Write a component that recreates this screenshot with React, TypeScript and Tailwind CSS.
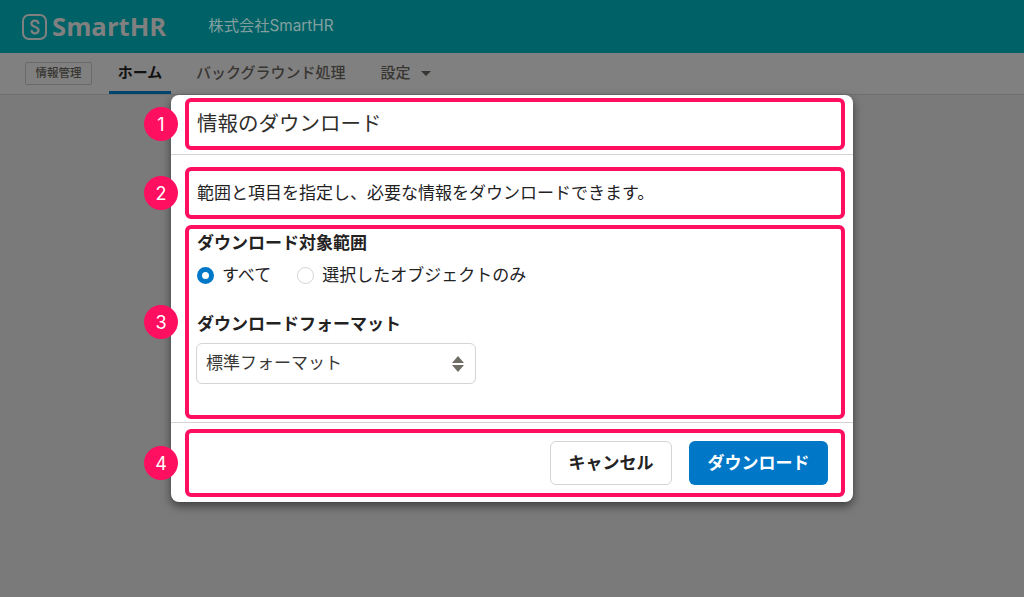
const jp = "font-['Inter','Noto_Sans_CJK_JP',sans-serif]";

function Badge({ n }: { n: number }) {
  return (
    <div className="absolute left-[-45px] top-1/2 flex h-[34px] w-[34px] -translate-y-1/2 items-center justify-center rounded-full bg-[#ff0f5f] text-[18px] font-normal text-white">
      {n}
    </div>
  );
}

function Radio({ checked, label }: { checked?: boolean; label: string }) {
  return (
    <div className="flex items-center gap-[8px]">
      {checked ? (
        <span className="h-[17px] w-[17px] rounded-full border-[5px] border-[#0077c7] bg-white" />
      ) : (
        <span className="h-[17px] w-[17px] rounded-full border border-[#d6d3d0] bg-white" />
      )}
      <span className="text-[17px] leading-[20px] text-[#23221f]">{label}</span>
    </div>
  );
}

export default function App() {
  return (
    <div className={`relative h-[597px] w-[1024px] overflow-hidden bg-[#7b7a7a] ${jp}`}>
      <header className="flex h-[53px] items-center bg-[#006266] pl-[22px]">
        <div className="flex h-[26px] w-[25px] items-center justify-center rounded-[7px] border-[2.5px] border-[#808080]">
          <svg viewBox="0 0 16 16" className="h-[18px] w-[18px]" fill="none" stroke="#808080" strokeWidth="2" strokeLinecap="round">
            <path d="M11 4.500 A3.200 3.200 0 0 0 4.800 5 c0 2.800 6.400 2.800 6.400 5.800 A3.200 3.200 0 0 1 5 11.500" />
          </svg>
        </div>
        <span className="ml-[5px] font-['Open_Sans',sans-serif] text-[25.700px] font-bold leading-none text-[#808080]">SmartHR</span>
        <span className="ml-[42px] text-[15.300px] text-[#82a0a0]">株式会社SmartHR</span>
      </header>
      <nav className="flex h-[42px] items-stretch border-b border-[#6e6e6e] bg-[#808080] pl-[25px] text-[15px] font-medium">
        <div className="my-auto flex h-[23px] w-[67px] items-center justify-center rounded-[2px] border border-[#6b6a68] text-[11.500px] text-[#383632]">
          情報管理
        </div>
        <div className="ml-[17px] flex w-[62px] items-center justify-center border-b-[3px] border-[#004470] pt-[3px] font-bold text-[#121110]">
          ホーム
        </div>
        <div className="ml-[25px] flex items-center text-[#383632]">バックグラウンド処理</div>
        <div className="ml-[35px] flex items-center text-[#383632]">
          設定
          <span className="ml-[11px] h-0 w-0 border-x-[5px] border-t-[5px] border-x-transparent border-t-[#383632]" />
        </div>
      </nav>

      <div className="absolute left-[171px] top-[95px] flex h-[407px] w-[682px] flex-col rounded-[8px] bg-white shadow-[0_4px_10px_rgba(0,0,0,0.5)]">
        <div className="relative mx-[14px] mt-[3px] flex h-[52px] w-[660px] items-center rounded-[6px] border-4 border-[#ff0f5f] pl-[8px] pt-[1px] text-[20.500px] text-[#2f2e2b]">
          <Badge n={1} />
          情報のダウンロード
        </div>
        <div className="mt-[4px] h-px bg-[#d6d3d0]" />
        <div className="relative mx-[14px] mt-[12px] flex h-[52px] w-[660px] items-center rounded-[6px] border-4 border-[#ff0f5f] pl-[8px] pt-[2px] text-[17px] text-[#23221f]">
          <Badge n={2} />
          範囲と項目を指定し、必要な情報をダウンロードできます。
        </div>
        <div className="relative mx-[14px] mt-[6px] flex h-[194px] w-[660px] flex-col rounded-[6px] border-4 border-[#ff0f5f] pl-[8px]">
          <Badge n={3} />
          <div className="mt-[2px] text-[17px] font-bold leading-[24px] text-[#23221f]">ダウンロード対象範囲</div>
          <div className="mt-[10px] flex gap-[26px]">
            <Radio checked label="すべて" />
            <Radio label="選択したオブジェクトのみ" />
          </div>
          <div className="mt-[27px] text-[17px] font-bold leading-[24px] text-[#23221f]">ダウンロードフォーマット</div>
          <div className="ml-[-1px] mt-[7px] flex h-[41px] w-[280px] items-center justify-between rounded-[6px] border border-[#d6d3d0] pl-[9px] pr-[11px] pt-[1px] text-[17px] text-[#3a3936]">
            標準フォーマット
            <svg viewBox="0 0 12 16" className="h-[16px] w-[12px]" fill="#706d65">
              <path d="M6 0 L12 7 H0 Z M0 9 H12 L6 16 Z" />
            </svg>
          </div>
        </div>
        <div className="mt-[3px] h-px bg-[#d6d3d0]" />
        <div className="relative mx-[14px] mt-[6px] flex h-[68px] w-[660px] items-center justify-end gap-[17px] rounded-[6px] border-4 border-[#ff0f5f] pr-[13px] text-[17px] font-bold">
          <Badge n={4} />
          <button className="h-[44px] w-[122px] rounded-[6px] border border-[#d6d3d0] bg-white pt-[2px] text-[#23221f]">キャンセル</button>
          <button className="h-[44px] w-[139px] rounded-[6px] bg-[#0077c7] pt-[2px] text-white">ダウンロード</button>
        </div>
      </div>
    </div>
  );
}
